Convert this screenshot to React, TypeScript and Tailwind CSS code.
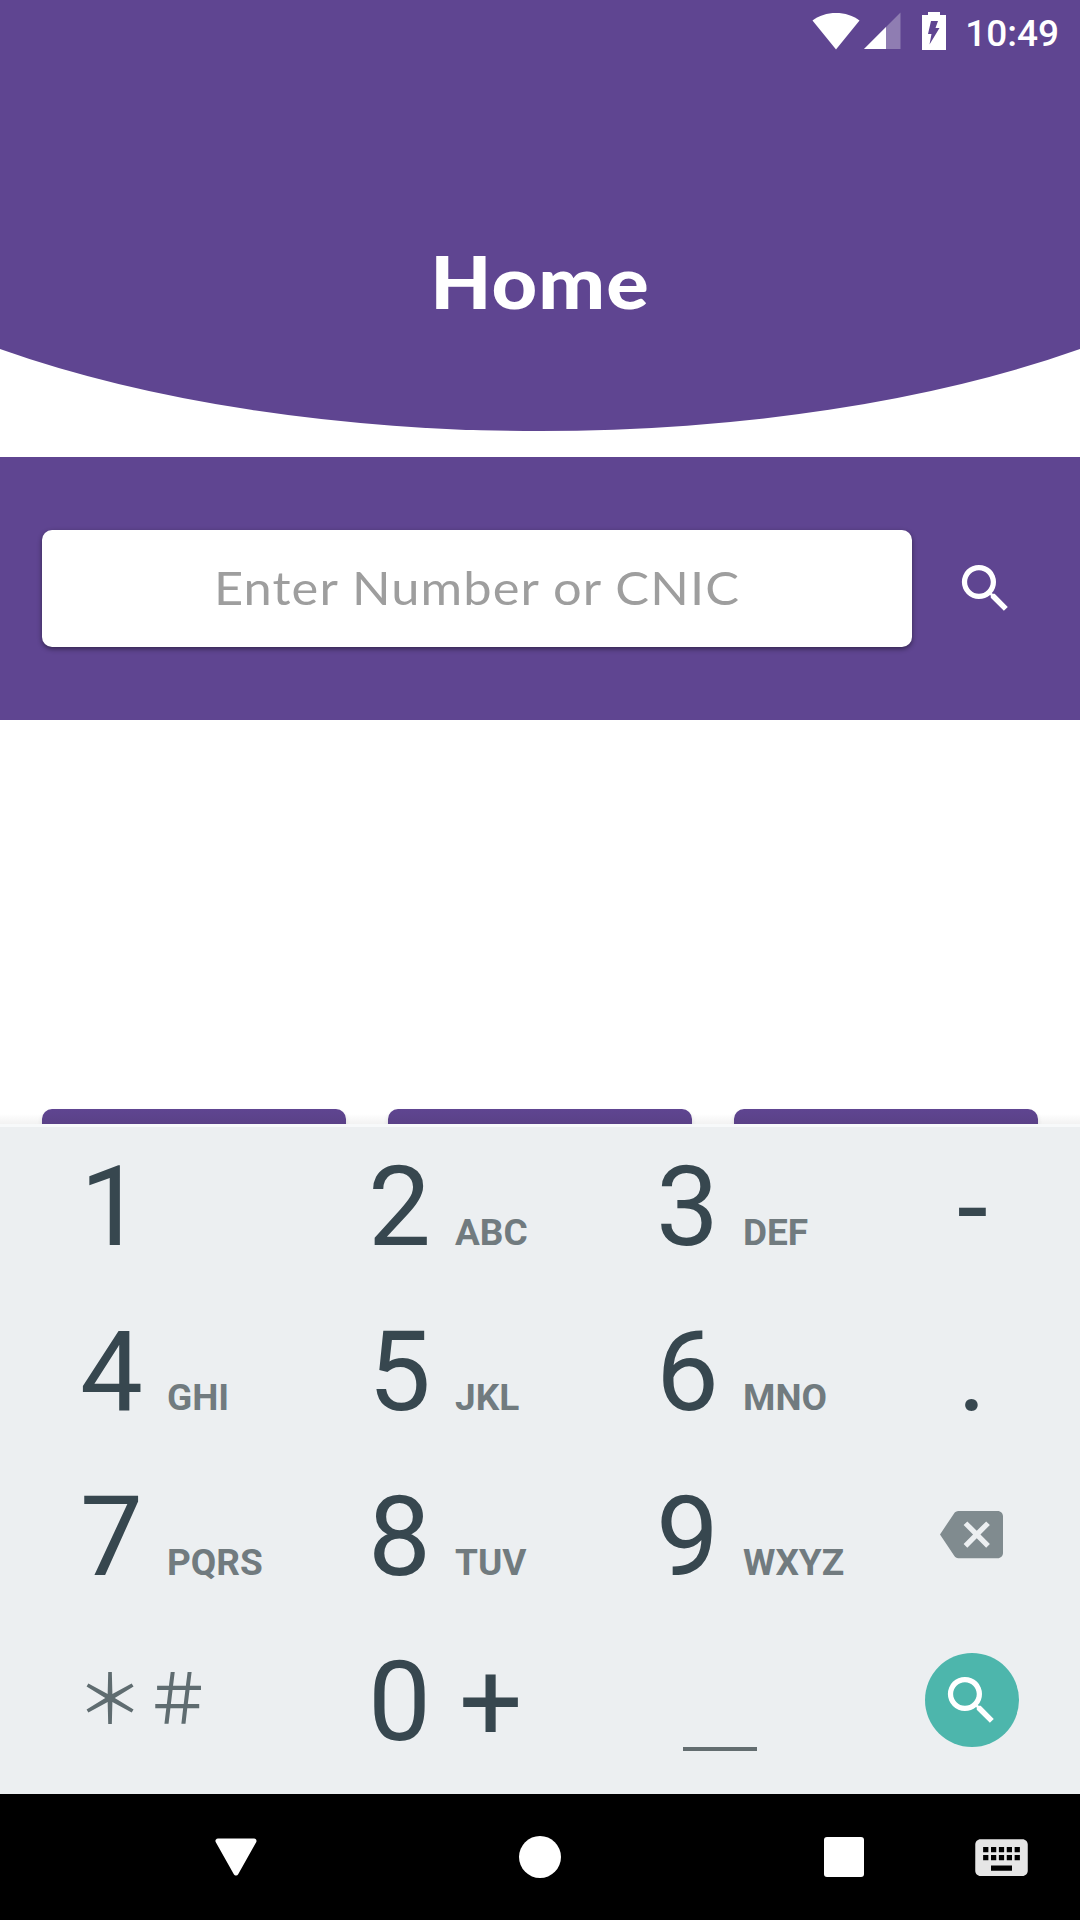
import type { ReactNode } from 'react';
import { MdBackspace, MdKeyboard, MdSearch } from 'react-icons/md';

interface KeyProps {
  digit: string;
  letters?: string;
}

const rows: { keys: KeyProps[]; side: ReactNode }[] = [
  {
    keys: [{ digit: '1' }, { digit: '2', letters: 'ABC' }, { digit: '3', letters: 'DEF' }],
    side: <span className="pt-[2px] pl-px text-[112px] leading-[165px] text-[#37474f]">-</span>,
  },
  {
    keys: [
      { digit: '4', letters: 'GHI' },
      { digit: '5', letters: 'JKL' },
      { digit: '6', letters: 'MNO' },
    ],
    side: <span className="text-[112px] leading-[165px] text-[#37474f]">.</span>,
  },
  {
    keys: [
      { digit: '7', letters: 'PQRS' },
      { digit: '8', letters: 'TUV' },
      { digit: '9', letters: 'WXYZ' },
    ],
    side: <MdBackspace className="mr-[2px] mb-1 h-[63px] w-[63px] text-[#808b8f]" />,
  },
];

function Key({ digit, letters }: KeyProps) {
  return (
    <button className="flex h-[165px] items-baseline pl-[80px] text-left">
      <span className="w-[63px] text-[112px] leading-[165px] text-[#37474f]">{digit}</span>
      {letters && <span className="ml-[24px] text-[37px] font-bold text-[#717b7f]">{letters}</span>}
    </button>
  );
}

function StatusBar() {
  return (
    <div className="flex h-[63px] items-start justify-end pr-[21px] text-white">
      <svg className="mt-[12px] h-[38px] w-[48px]" viewBox="0 0 48 38" fill="currentColor">
        <path d="M24 37.5 L0.5 8.5 C7 3.5 15 1 24 1 C33 1 41 3.5 47.5 8.5 Z" />
      </svg>
      <svg className="mt-[12px] ml-[4px] h-[38px] w-[37px]" viewBox="0 0 37 38" fill="currentColor">
        <path d="M0 37 L36.5 0.5 V37 Z" fillOpacity="0.3" />
        <path d="M0 37 L22 15 V37 Z" />
      </svg>
      <svg className="mt-[12px] ml-[21px] h-[38px] w-[24px]" viewBox="0 0 24 38" fill="currentColor">
        <path d="M6 0 H18 V3 H24 V38 H0 V3 H6 Z" />
        <path d="M9 9 H16 L13.5 16 H17.5 L7.5 32.5 L9.5 22 H6 Z" fill="#5f4591" />
      </svg>
      <span className="mt-[12px] ml-[19px] text-[37px] leading-[43px] font-medium">10:49</span>
    </div>
  );
}

function Header() {
  return (
    <header className="relative h-[457px] bg-white">
      <svg className="absolute inset-0 h-[457px] w-[1080px]" viewBox="0 0 1080 457">
        <path d="M0 0 H1080 V349 A810 322 0 0 1 0 349 Z" fill="#5f4591" />
      </svg>
      <div className="relative">
        <StatusBar />
        <h1 className="scale-x-[1.1] pt-[173px] text-center font-['Lato','Liberation_Sans',sans-serif] text-[72px] leading-[90px] font-black tracking-[1px] text-white">
          Home
        </h1>
      </div>
    </header>
  );
}

export default function App() {
  return (
    <div className="flex h-[1920px] w-[1080px] flex-col overflow-hidden bg-white font-['Roboto','Liberation_Sans',sans-serif]">
      <Header />

      {/* search */}
      <section className="flex h-[263px] items-center bg-[#5f4591] pl-[42px]">
        <div className="flex h-[117px] w-[870px] justify-center rounded-[10px] bg-white shadow-[0_2px_5px_rgba(0,0,0,0.45)]">
          <input
            className="h-[115px] w-[700px] scale-x-[1.1] text-center font-['Lato','Liberation_Sans',sans-serif] text-[46px] tracking-[1px] outline-none placeholder:text-[#9e9e9e]"
            placeholder="Enter Number or CNIC"
          />
        </div>
        <MdSearch className="ml-[42px] h-[63px] w-[63px] text-white" />
      </section>

      {/* cards cut off by the keyboard */}
      <main className="flex h-[404px] gap-[42px] overflow-hidden bg-linear-to-b from-white from-[394px] to-[#f2f2f2] px-[42px] pt-[389px]">
        {['first', 'second', 'third'].map((id) => (
          <div
            key={id}
            className="h-[300px] w-[304px] rounded-[10px] bg-linear-to-b from-[#5f4591] from-[0px] to-[#5a4187] to-[15px] shadow-[0_3px_5px_rgba(0,0,0,0.12)]"
          />
        ))}
      </main>

      {/* keyboard */}
      <section className="h-[670px] border-t-[3px] border-[#f7f9fa] bg-[#eceff1]">
        <div className="-mt-[3px]">
          {rows.map((row) => (
            <div key={row.keys[0].digit} className="grid grid-cols-[288px_288px_288px_216px]">
              {row.keys.map((key) => (
                <Key key={key.digit} {...key} />
              ))}
              <button className="flex h-[165px] items-center justify-center">{row.side}</button>
            </div>
          ))}
          <div className="grid grid-cols-[288px_288px_288px_216px]">
            <button className="flex h-[165px] items-center pb-[13px] pl-[76px] font-['Noto_Sans_CJK_JP',sans-serif] text-[68px] text-[#5f6c70]">
              ＊＃
            </button>
            <button className="flex h-[165px] items-baseline pl-[80px] text-[112px] leading-[165px] text-[#37474f]">
              <span className="w-[63px]">0</span>
              <span className="ml-[28px]">+</span>
            </button>
            <button className="flex h-[165px] items-end justify-center pb-[33px]">
              <span className="h-[4px] w-[74px] bg-[#636d70]" />
            </button>
            <button className="flex h-[165px] items-center justify-center">
              <span className="mb-[3px] flex h-[94px] w-[94px] items-center justify-center rounded-full bg-[#4db6ac]">
                <MdSearch className="mr-px h-[63px] w-[63px] text-white" />
              </span>
            </button>
          </div>
        </div>
      </section>

      {/* navigation bar */}
      <nav className="flex h-[126px] items-center bg-black text-white">
        <svg className="ml-[215px] h-[38px] w-[42px]" viewBox="0 0 42 38" fill="currentColor">
          <path
            d="M3 3 H39 L21 35 Z"
            stroke="currentColor"
            strokeWidth="5"
            strokeLinejoin="round"
          />
        </svg>
        <span className="ml-[262px] h-[42px] w-[42px] rounded-full bg-white" />
        <span className="ml-[263px] h-[40px] w-[40px] rounded-[3px] bg-white" />
        <MdKeyboard className="ml-[106px] h-[63px] w-[63px] text-[#e6e6e6]" />
      </nav>
    </div>
  );
}
